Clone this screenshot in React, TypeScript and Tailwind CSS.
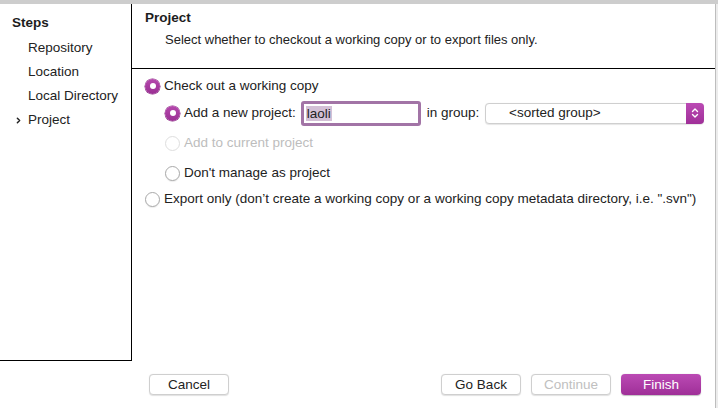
import { ChevronRight } from 'lucide-react'

type RadioProps = { checked?: boolean; disabled?: boolean; label: string }

function Radio({ checked, disabled, label }: RadioProps) {
  return (
    <div className="flex items-center gap-[4px] whitespace-nowrap">
      {checked ? (
        <span className="w-[15px] h-[15px] shrink-0 rounded-full bg-gradient-to-b from-[#b548ad] to-[#9a2f93] flex items-center justify-center shadow-[0_0_0_0.5px_#8a2a84]">
          <span className="w-[6px] h-[6px] rounded-full bg-white" />
        </span>
      ) : (
        <span
          className={`w-[15px] h-[15px] shrink-0 rounded-full bg-white border ${disabled ? 'border-[#dedede]' : 'border-[#a9a9a9] shadow-[0_1px_1px_rgba(0,0,0,0.08)]'}`}
        />
      )}
      <span className={disabled ? 'text-[#bdbdbd]' : 'text-[#222]'}>{label}</span>
    </div>
  )
}

function Button({ label, kind = 'normal' }: { label: string; kind?: 'normal' | 'disabled' | 'primary' }) {
  if (kind === 'primary') {
    return (
      <div className="w-[80px] h-[21px] rounded-[4px] bg-gradient-to-b from-[#bb4ab4] to-[#9f2f98] text-white flex items-center justify-center shadow-[0_0.5px_1px_rgba(0,0,0,0.25)]">
        {label}
      </div>
    )
  }
  return (
    <div
      className={`w-[80px] h-[21px] rounded-[4px] bg-white border border-[#cfcfcf] flex items-center justify-center shadow-[0_0.5px_1px_rgba(0,0,0,0.12)] ${kind === 'disabled' ? 'text-[#c0c0c0]' : 'text-[#222]'}`}
    >
      {label}
    </div>
  )
}

export default function App() {
  const steps = ['Repository', 'Location', 'Local Directory', 'Project']

  return (
    <div className="w-[718px] h-[408px] flex flex-col bg-white text-[13.5px] leading-[16px] text-[#222] font-['Liberation_Sans',Arial,sans-serif] overflow-hidden">
      {/* Title bar edge */}
      <div className="h-[4px] bg-[#cdcdcd] shrink-0" />

      <div className="flex flex-1">
        <div className="w-[715px] flex flex-col">
          <div className="flex h-[357px]">
            {/* Steps sidebar */}
            <div className="w-[132px] border-r border-b border-black pt-[11px] pl-[12px] flex flex-col">
              <div className="font-bold text-[#1d1d1d]">Steps</div>
              <div className="mt-[9px] flex flex-col gap-[8px]">
                {steps.map((s, i) => (
                  <div key={s} className="flex items-center">
                    <span className="w-[16px] flex items-center">
                      {i === steps.length - 1 && <ChevronRight className="w-[9px] h-[9px] ml-[2px]" strokeWidth={4} />}
                    </span>
                    <span>{s}</span>
                  </div>
                ))}
              </div>
            </div>

            {/* Main pane */}
            <div className="flex-1 flex flex-col">
              <div className="h-[65px] border-b border-black pl-[13px] pt-[3px]">
                <div className="font-bold text-[#1d1d1d] leading-[22px]">Project</div>
                <div className="pl-[20px] leading-[22px] text-[13px]">
                  Select whether to checkout a working copy or to export files only.
                </div>
              </div>

              <div className="pl-[13px] pt-[9px] flex flex-col">
                <Radio checked label="Check out a working copy" />
                <div className="pl-[20px] flex flex-col">
                  <div className="flex items-center mt-[6px] h-[26px]">
                    <Radio checked label="Add a new project:" />
                    <div className="ml-[5px] w-[120px] h-[25px] rounded-[3px] border-[3px] border-[#a274a6] bg-white flex items-center pl-[2px]">
                      <span className="bg-[#d3c0d6] px-[1px] leading-[15px]">laoli</span>
                    </div>
                    <span className="ml-[6px]">in group:</span>
                    <div className="ml-auto mr-[11px] w-[219px] h-[21px] rounded-[4px] border border-[#cfcfcf] bg-white flex items-center justify-between shadow-[0_0.5px_1px_rgba(0,0,0,0.1)]">
                      <span className="pl-[23px]">&lt;sorted group&gt;</span>
                      <span className="w-[18px] h-[21px] -mr-px rounded-r-[4px] bg-gradient-to-b from-[#bb4ab4] to-[#9f2f98] flex items-center justify-center">
                        <svg width="8" height="12" viewBox="0 0 8 12" fill="none" stroke="white" strokeWidth="1.4" strokeLinecap="round" strokeLinejoin="round">
                          <path d="M1.5 4.5 L4 2 L6.5 4.5" />
                          <path d="M1.5 7.5 L4 10 L6.5 7.5" />
                        </svg>
                      </span>
                    </div>
                  </div>
                  <div className="mt-[4px] h-[26px] flex items-center">
                    <Radio disabled label="Add to current project" />
                  </div>
                  <div className="mt-[4px] h-[26px] flex items-center">
                    <Radio label="Don't manage as project" />
                  </div>
                </div>
                <div className="h-[26px] flex items-center">
                  <Radio label={'Export only (don\u2019t create a working copy or a working copy metadata directory, i.e. ".svn")'} />
                </div>
              </div>
            </div>
          </div>

          {/* Footer buttons */}
          <div className="flex-1 flex items-start pt-[13px] pl-[149px] pr-[14px]">
            <Button label="Cancel" />
            <div className="flex-1" />
            <div className="flex gap-[10px]">
              <Button label="Go Back" />
              <Button label="Continue" kind="disabled" />
              <Button label="Finish" kind="primary" />
            </div>
          </div>
        </div>

        <div className="w-px bg-[#bdbdbd]" />
        <div className="flex-1 bg-[#ececec]" />
      </div>
    </div>
  )
}
